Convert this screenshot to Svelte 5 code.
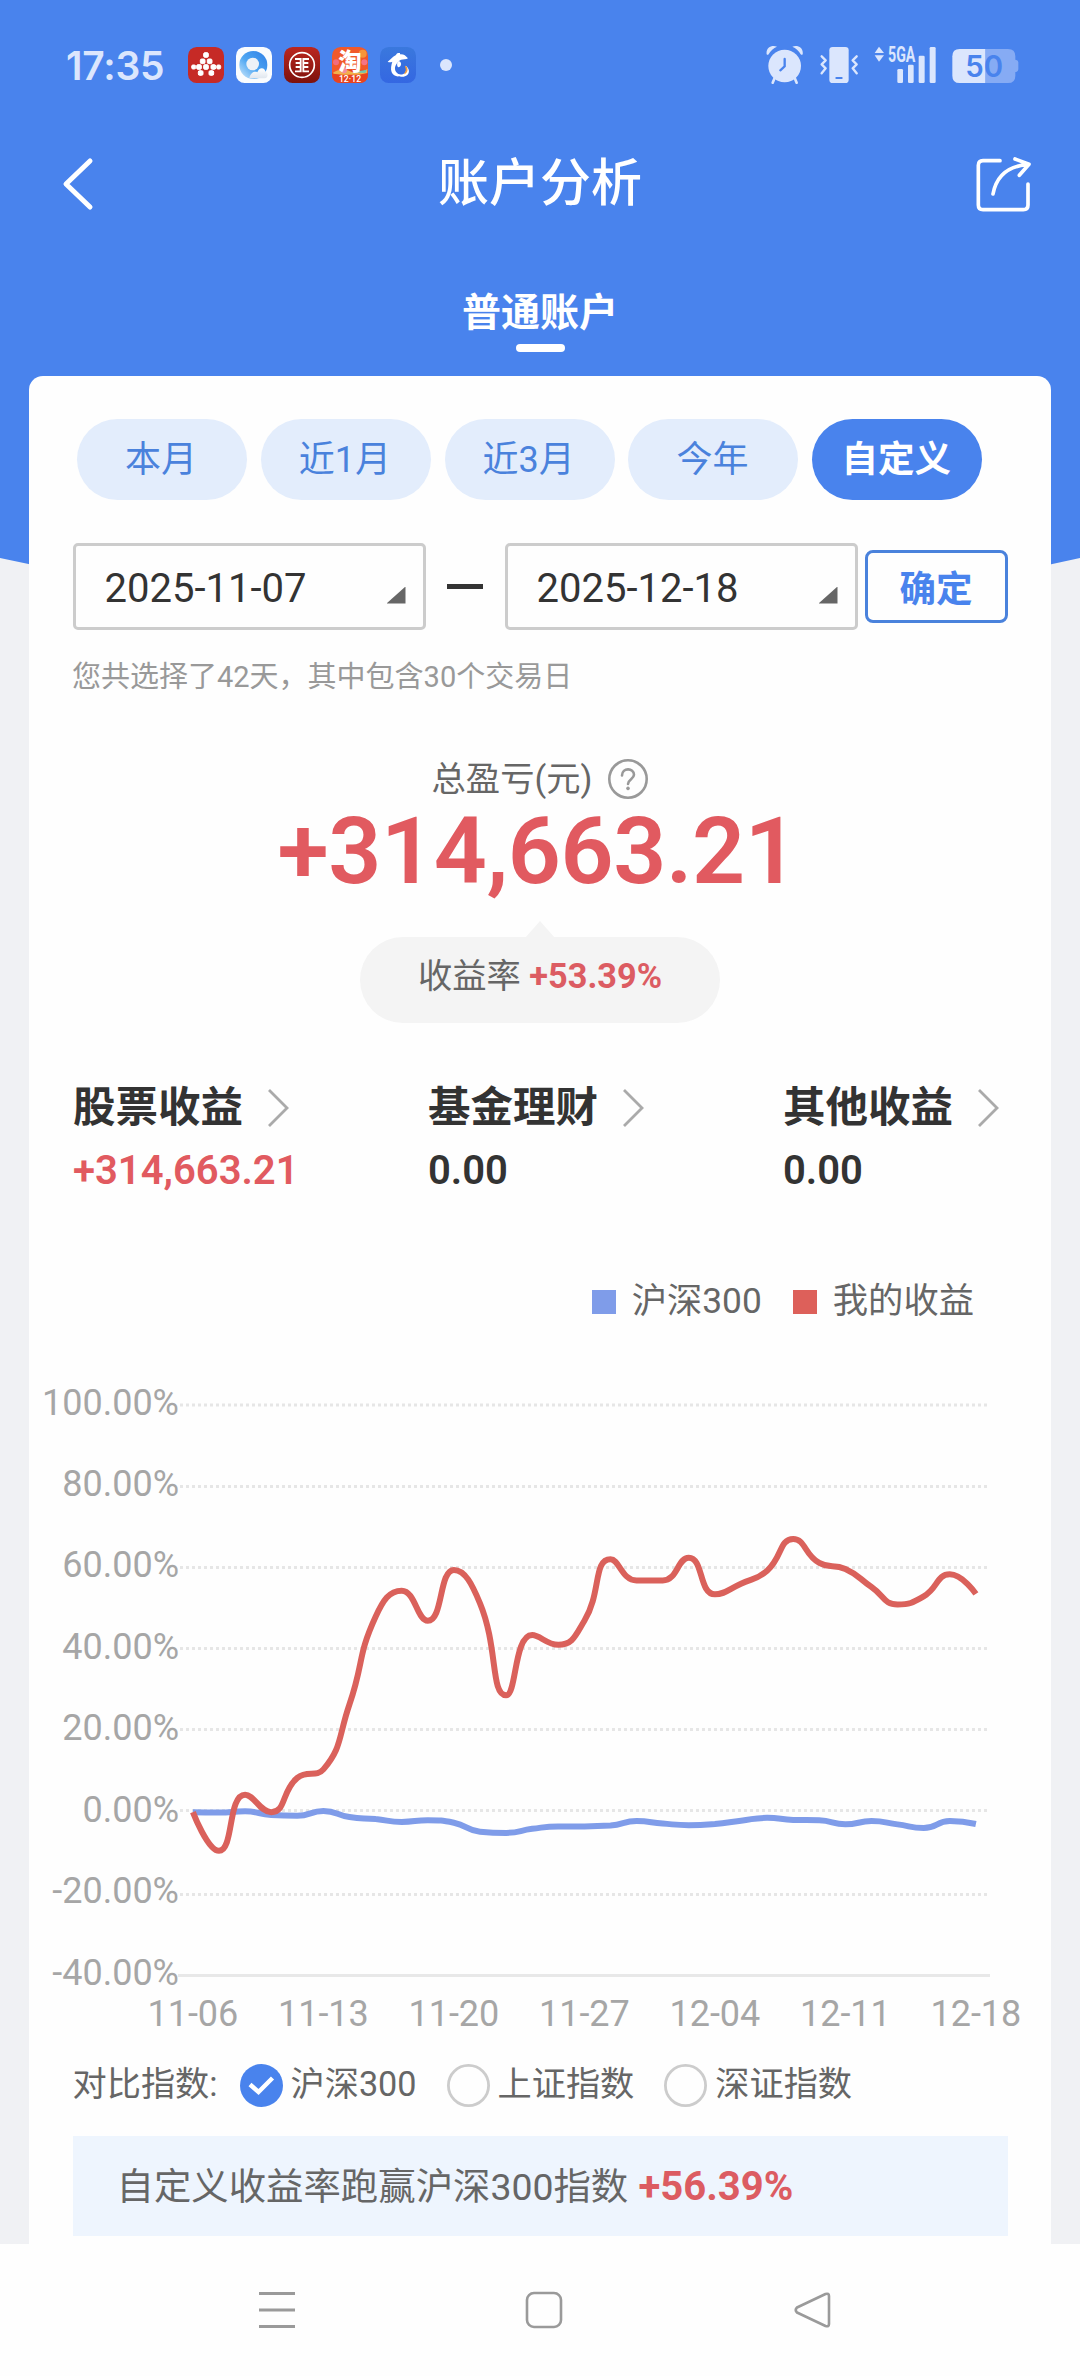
<script lang="ts">
	interface Option {
		key: string;
		label: string;
	}

	const ranges: Option[] = [
		{ key: 'month', label: '本月' },
		{ key: '1m', label: '近1月' },
		{ key: '3m', label: '近3月' },
		{ key: 'year', label: '今年' },
		{ key: 'custom', label: '自定义' }
	];

	const indexes: Option[] = [
		{ key: 'hs300', label: '沪深300' },
		{ key: 'sh', label: '上证指数' },
		{ key: 'sz', label: '深证指数' }
	];

	const incomes = [
		{ title: '股票收益', value: '+314,663.21', up: true },
		{ title: '基金理财', value: '0.00', up: false },
		{ title: '其他收益', value: '0.00', up: false }
	];

	let activeRange = $state('custom');
	let activeIndex = $state('hs300');

	// 收益率（%），每个交易日一个点
	const mine = [
		0, -9.5, 4.3, 0, 8.4, 10.5, 26.5, 48, 54.4, 47, 59.5, 51.3, 28.7, 43.5, 41.1, 47, 62.1, 56.9,
		56.9, 62.5, 53.5, 56.1, 59.3, 67.1, 61.2, 59.7, 55.3, 51, 53, 58.4, 53.6
	];
	const hs300 = [
		0, -0.1, 0.2, -0.7, -0.9, 0.3, -1.2, -1.7, -2.4, -2, -2.6, -4.8, -5.1, -4.1, -3.5, -3.5, -3.3,
		-2.2, -2.8, -3.2, -2.9, -2.1, -1.4, -1.9, -2, -3, -2.2, -3, -3.9, -2.2, -2.9
	];

	const yTicks = [
		{ label: '100.00%', y: 35, base: 45 },
		{ label: '80.00%', y: 116.5, base: 126 },
		{ label: '60.00%', y: 197.5, base: 207 },
		{ label: '40.00%', y: 278.5, base: 289 },
		{ label: '20.00%', y: 359.5, base: 370 },
		{ label: '0.00%', y: 440.5, base: 452 },
		{ label: '-20.00%', y: 524.5, base: 533 },
		{ label: '-40.00%', y: 605.5, base: 615 }
	];
	const xTicks = ['11-06', '11-13', '11-20', '11-27', '12-04', '12-11', '12-18'];

	const X0 = 163.9;
	const STEP = 26.1;

	const px = (i: number) => X0 + i * STEP;
	const py = (v: number) => 35 + (100 - v) * 4.0714;

	function clamp(v: number, a: number, b: number): number {
		return Math.max(Math.min(v, Math.max(a, b)), Math.min(a, b));
	}

	// 平滑曲线，控制点限制在相邻两点之间，避免越过峰值
	function smoothPath(values: number[], smooth = 0.5): string {
		const pts = values.map((v, i) => [px(i), py(v)]);
		let d = `M${pts[0][0]},${pts[0][1]}`;
		let [cx0, cy0] = pts[0];

		for (let i = 1; i < pts.length; i++) {
			const [x, y] = pts[i];
			const [prevX, prevY] = pts[i - 1];
			let cx1 = x;
			let cy1 = y;
			let nx0 = x;
			let ny0 = y;

			if (i < pts.length - 1) {
				const [nextX, nextY] = pts[i + 1];
				const lenPrev = Math.hypot(x - prevX, y - prevY);
				const lenNext = Math.hypot(nextX - x, nextY - y);
				const ratio = lenNext / (lenNext + lenPrev);

				nx0 = clamp(x + (nextX - prevX) * smooth * ratio, nextX, x);
				ny0 = clamp(y + (nextY - prevY) * smooth * ratio, nextY, y);
				cx1 = clamp(x - ((nx0 - x) * lenPrev) / lenNext, prevX, x);
				cy1 = clamp(y - ((ny0 - y) * lenPrev) / lenNext, prevY, y);
				nx0 = x + ((x - cx1) * lenNext) / lenPrev;
				ny0 = y + ((y - cy1) * lenNext) / lenPrev;
			}

			d += `C${[cx0, cy0, cx1, cy1, x, y].map((n) => n.toFixed(2)).join(',')}`;
			cx0 = nx0;
			cy0 = ny0;
		}
		return d;
	}

	const minePath = smoothPath(mine);
	const hs300Path = smoothPath(hs300);
</script>

<div class="screen">
	<svg class="backdrop" width="1080" height="620" viewBox="0 0 1080 620">
		<path d="M0 0H1080V558Q540 679 0 558Z" fill="#4983ed" />
	</svg>

	<div class="status-bar">
		<span class="clock">17:35</span>
		<div class="apps">
			<svg class="app" viewBox="0 0 108 108">
				<rect width="108" height="108" rx="26" fill="#c62a26" />
				<g fill="#fff" stroke="#fff" stroke-width="3">
					<rect x="47" y="17" width="14" height="14" rx="4" />
					<rect x="37" y="36" width="14" height="14" rx="4" />
					<rect x="58" y="36" width="14" height="14" rx="4" />
					<rect x="26" y="53" width="14" height="14" rx="4" />
					<rect x="47" y="53" width="14" height="14" rx="4" />
					<rect x="69" y="53" width="14" height="14" rx="4" />
					<rect x="11" y="54" width="12" height="12" rx="4" />
					<rect x="86" y="54" width="12" height="12" rx="4" />
					<rect x="31" y="71" width="14" height="14" rx="4" />
					<rect x="63" y="71" width="14" height="14" rx="4" />
				</g>
			</svg>
			<svg class="app" viewBox="0 0 108 108">
				<defs>
					<linearGradient id="ring" x1="1" y1="0" x2="0" y2="1">
						<stop offset="0" stop-color="#2f7fe6" />
						<stop offset="0.55" stop-color="#4ea6f2" />
						<stop offset="1" stop-color="#d4ecfc" />
					</linearGradient>
					<linearGradient id="cloud" x1="0" y1="0" x2="0" y2="1">
						<stop offset="0" stop-color="#ffffff" />
						<stop offset="1" stop-color="#dfe6ee" />
					</linearGradient>
				</defs>
				<rect width="108" height="108" rx="26" fill="#fafcfe" />
				<circle cx="52" cy="54" r="42" fill="url(#ring)" />
				<circle cx="50" cy="51" r="19" fill="#eef2f7" />
				<path d="M40 94C44 76 56 72 64 76C68 62 84 58 89 74C97 78 97 92 86 94Z" fill="url(#cloud)" />
			</svg>
			<svg class="app" viewBox="0 0 108 108">
				<defs>
					<linearGradient id="bank" x1="0" y1="0" x2="0" y2="1">
						<stop offset="0" stop-color="#bb2720" />
						<stop offset="1" stop-color="#7d120d" />
					</linearGradient>
				</defs>
				<rect width="108" height="108" rx="26" fill="url(#bank)" />
				<circle cx="54" cy="54" r="37" fill="none" stroke="#fff" stroke-width="5" />
				<path
					d="M33 36H50V48H35M75 36H58V48H73M35 60H50V73H33M73 60H58V73H75M50 46V62M58 46V62"
					fill="none"
					stroke="#fff"
					stroke-width="5.5"
				/>
			</svg>
			<svg class="app" viewBox="0 0 108 108">
				<rect width="108" height="108" rx="26" fill="#f0592a" />
				<path d="M0 78Q40 62 108 70V82Q108 108 82 108H26Q0 108 0 82Z" fill="#e8431f" />
				<path d="M4 76Q30 60 58 74Q84 82 106 66V78Q70 88 4 80Z" fill="#f2b04c" />
				<path d="M62 76L104 68L100 78Z" fill="#6fc7b0" />
				<circle cx="92" cy="20" r="12" fill="#f7963a" />
				<circle cx="12" cy="46" r="9" fill="#f06c7c" />
				<circle cx="97" cy="46" r="9" fill="#f47486" />
				<circle cx="36" cy="70" r="9" fill="#f58da0" />
				<text x="54" y="68" class="app-char">淘</text>
				<text x="54" y="105" class="app-date">12·12</text>
			</svg>
			<svg class="app" viewBox="0 0 108 108">
				<defs>
					<linearGradient id="sea" x1="0" y1="0" x2="0" y2="1">
						<stop offset="0" stop-color="#3a78dd" />
						<stop offset="1" stop-color="#3467e2" />
					</linearGradient>
				</defs>
				<rect width="108" height="108" rx="26" fill="url(#sea)" />
				<path
					d="M23 44C32 38 37 30 48 24C50 18 54 17 60 18L60 22C71 21 77 26 84 34C78 38 70 37 63 38C52 44 44 56 45 66C46 76 54 84 64 85C54 92 40 87 35 76C31 66 34 54 37 44C32 46 27 46 23 44Z"
					fill="#fff"
				/>
				<path d="M56 42C66 44 66 60 54 61C50 56 50 46 56 42Z" fill="#fff" />
				<path d="M46 72C52 84 66 86 74 78C80 72 80 64 76 56C88 62 90 76 82 84C70 94 50 90 46 72Z" fill="#fff" />
				<path d="M76 57C84 64 82 76 74 80C80 72 80 65 76 57Z" stroke="#f39a35" stroke-width="3" fill="#f39a35" />
			</svg>
		</div>
		<i class="more-dot"></i>

		<div class="system">
			<svg width="38" height="40" viewBox="75 45 114 120" fill="#dbe6fd">
				<circle cx="131" cy="108" r="49" />
				<path d="M77 73C74 55 90 44 108 50Q92 56 83 73Q79 76 77 73Z" />
				<path d="M185 73C188 55 172 44 154 50Q170 56 179 73Q183 76 185 73Z" />
				<path d="M100 146L95 158M162 146L167 158" stroke="#dbe6fd" stroke-width="8" stroke-linecap="round" />
				<path d="M131 87V109L118 121" stroke="#4983ed" stroke-width="7" stroke-linecap="round" fill="none" />
			</svg>
			<svg class="vibrate" width="38" height="40" viewBox="237 45 114 120">
				<rect x="265" y="51" width="58" height="108" rx="10" fill="#dbe6fd" />
				<rect x="283" y="141" width="22" height="6" rx="3" fill="#4983ed" />
				<path
					d="M242 79L254 91L242 103L254 115L242 130M347 79L335 91L347 103L335 115L347 130"
					fill="none"
					stroke="#dbe6fd"
					stroke-width="7"
					stroke-linecap="round"
					stroke-linejoin="round"
				/>
			</svg>
			<svg class="signal" width="62" height="60" viewBox="400 15 186 180" fill="#dbe6fd">
				<path d="M402 69L415 50L430 69Z" />
				<path d="M402 76L415 95L430 76Z" />
				<text x="442" y="96" class="net" textLength="82" lengthAdjust="spacingAndGlyphs">5GA</text>
				<rect x="470" y="117" width="17" height="42" rx="4" />
				<rect x="502" y="104" width="17" height="55" rx="4" />
				<rect x="534" y="77" width="18" height="82" rx="4" />
				<rect x="567" y="51" width="18" height="108" rx="4" />
			</svg>
			<svg class="battery" width="67" height="40" viewBox="635 45 201 120">
				<path d="M735 57H803Q825 57 825 79V89Q834 90 834 97V118Q834 125 825 126V137Q825 159 803 159H735Z" fill="#86abf4" />
				<path d="M735 57H658Q636 57 636 79V137Q636 159 658 159H735Z" fill="#dbe6fd" />
				<text x="675" y="141" class="level" fill="#4983ed">50</text>
			</svg>
		</div>
	</div>

	<header class="title-bar">
		<svg width="36" height="56" viewBox="0 0 36 56" fill="none" stroke="#fff" stroke-width="5">
			<path d="M32 6L8 29L32 52" stroke-linecap="round" stroke-linejoin="round" />
		</svg>
		<h1>账户分析</h1>
		<svg width="60" height="60" viewBox="40 39 180 180" fill="none" stroke="#fff" stroke-width="11">
			<path
				d="M118 62H67Q53 62 53 76V195Q53 209 67 209H188Q202 209 202 195V132M97 162Q112 82 198 74M163 57L205 73L176 106"
				stroke-linecap="round"
				stroke-linejoin="round"
			/>
		</svg>
	</header>

	<div class="account-tab">
		<span>普通账户</span>
		<i></i>
	</div>

	<main class="card">
		<div class="ranges">
			{#each ranges as range (range.key)}
				<button
					class="range"
					class:active={activeRange === range.key}
					onclick={() => (activeRange = range.key)}>{range.label}</button
				>
			{/each}
		</div>

		<div class="dates">
			<div class="date">
				<span>2025-11-07</span>
				<i class="corner"></i>
			</div>
			<i class="dash"></i>
			<div class="date">
				<span>2025-12-18</span>
				<i class="corner"></i>
			</div>
			<button class="confirm">确定</button>
		</div>
		<p class="note">您共选择了42天，其中包含30个交易日</p>

		<div class="total-label">
			<span>总盈亏(元)</span>
			<svg width="40" height="40" viewBox="0 0 40 40" fill="none" stroke="#999" stroke-width="2.6">
				<circle cx="20" cy="20" r="18.7" />
				<path d="M14 16.5C14 8.5 26 8.5 26 15.8C26 20 20 20.5 20 25" stroke-linecap="round" />
				<circle cx="20" cy="29.4" r="1.4" fill="#999" stroke-width="1" />
			</svg>
		</div>
		<div class="total">+314,663.21</div>
		<div class="rate">收益率 <b>+53.39%</b></div>

		<div class="incomes">
			{#each incomes as item (item.title)}
				<div class="income">
					<div class="income-title">
						<span>{item.title}</span>
						<svg width="24" height="40" viewBox="0 0 24 40" fill="none" stroke="#aaa" stroke-width="2.8">
							<path d="M3 2L21 20L3 38" />
						</svg>
					</div>
					<div class="income-value" class:up={item.up}>{item.value}</div>
				</div>
			{/each}
		</div>

		<div class="legend">
			<i class="swatch blue"></i><span>沪深300</span>
			<i class="swatch red"></i><span>我的收益</span>
		</div>

		<svg class="chart" width="1022" height="670" viewBox="0 0 1022 670">
			{#each yTicks as tick, i (tick.label)}
				{#if i < yTicks.length - 1}
					<line x1="151" x2="958" y1={tick.y} y2={tick.y} class="grid" />
				{:else}
					<line x1="149" x2="961" y1={tick.y} y2={tick.y} class="axis" />
				{/if}
				<text x="150" y={tick.base} class="y-label">{tick.label}</text>
			{/each}
			{#each xTicks as label, i (label)}
				<text x={px(i * 5)} y="656" class="x-label">{label}</text>
			{/each}
			<path d={hs300Path} class="line" stroke="#7f9ce9" />
			<path d={minePath} class="line" stroke="#da615b" />
		</svg>

		<div class="compare">
			<span class="compare-label">对比指数:</span>
			{#each indexes as item (item.key)}
				<button class="radio" onclick={() => (activeIndex = item.key)}>
					<svg width="43" height="43" viewBox="0 0 43 43" fill="none">
						{#if activeIndex === item.key}
							<circle cx="21.5" cy="21.5" r="21.5" fill="#4983ed" />
							<path d="M10 20.5L18.5 28L32.5 14" stroke="#fff" stroke-width="4.4" />
						{:else}
							<circle cx="21.5" cy="21.5" r="20.1" stroke="#ccc" stroke-width="2.8" />
						{/if}
					</svg>
					<span>{item.label}</span>
				</button>
			{/each}
		</div>

		<div class="banner">自定义收益率跑赢沪深300指数 <b>+56.39%</b></div>
	</main>

	<nav class="nav-bar">
		<svg width="36" height="38" viewBox="0 0 36 38" stroke="#9a9a9a" stroke-width="3">
			<path d="M0 2.5H36M0 19H36M0 35.5H36" />
		</svg>
		<svg width="38" height="38" viewBox="0 0 38 38" fill="none" stroke="#9a9a9a" stroke-width="2.6">
			<rect x="2" y="2" width="34" height="34" rx="7" />
		</svg>
		<svg width="38" height="38" viewBox="0 0 38 38" fill="none" stroke="#9a9a9a" stroke-width="2.6">
			<path d="M32.5 3L4 16.5Q1.5 19 4 21.5L32.5 35Q36 36 36 33V5Q36 2 32.5 3Z" stroke-linejoin="round" />
		</svg>
	</nav>
</div>

<style>
	:global(body) {
		margin: 0;
		background: #f0f1f4;
	}

	.screen {
		position: relative;
		width: 1080px;
		height: 2376px;
		overflow: hidden;
		display: flex;
		flex-direction: column;
		background: #f0f1f4;
		color: #666;
		font-family: Roboto, 'Noto Sans CJK SC', sans-serif;
	}

	.screen > :not(.backdrop) {
		position: relative;
	}

	.backdrop {
		position: absolute;
		top: 0;
		left: 0;
	}

	button {
		padding: 0;
		border: none;
		background: none;
		font-family: inherit;
		color: inherit;
	}

	svg {
		display: block;
		flex-shrink: 0;
	}

	.status-bar {
		height: 130px;
		box-sizing: border-box;
		padding: 0 61px 0 66px;
		display: flex;
		align-items: center;
	}

	.clock {
		width: 122px;
		font-family: Inter, sans-serif;
		font-size: 39px;
		font-weight: 600;
		letter-spacing: -0.2px;
		color: #dbe6fd;
	}

	.apps {
		display: flex;
		gap: 12px;
	}

	.app {
		width: 36px;
		height: 36px;
	}

	.app-char {
		font-size: 70px;
		font-weight: 900;
		fill: #fff;
		text-anchor: middle;
	}

	.app-date {
		font-size: 26px;
		font-weight: 500;
		fill: #fff;
		text-anchor: middle;
	}

	.more-dot {
		width: 12px;
		height: 12px;
		margin-left: 24px;
		border-radius: 50%;
		background: #dbe6fd;
	}

	.system {
		margin-left: auto;
		display: flex;
		align-items: center;
		gap: 16px;
	}

	.net {
		font-size: 64px;
		font-weight: 700;
	}

	.level {
		font-family: Inter, sans-serif;
		font-size: 88px;
		font-weight: 600;
	}

	.title-bar {
		height: 106px;
		padding: 0 46px 0 58px;
		display: flex;
		align-items: center;
		justify-content: space-between;
	}

	h1 {
		margin: 2px 0 0 12px;
		font-size: 51px;
		line-height: 60px;
		font-weight: 500;
		color: #fff;
	}

	.account-tab {
		height: 140px;
		box-sizing: border-box;
		padding-top: 48px;
		display: flex;
		flex-direction: column;
		align-items: center;
		color: #fff;
		font-size: 39px;
		line-height: 58px;
		font-weight: 700;
	}

	.account-tab i {
		width: 49px;
		height: 8px;
		margin-top: 2px;
		border-radius: 4px;
		background: #fff;
	}

	.card {
		height: 1868px;
		box-sizing: border-box;
		margin: 0 29px;
		padding-top: 43px;
		border-radius: 14px 14px 0 0;
		background: #fefefe;
	}

	.ranges {
		display: flex;
		gap: 13.8px;
		padding-left: 48px;
	}

	.range {
		width: 170px;
		height: 81px;
		padding: 0 2px 7px 0;
		border-radius: 41px;
		background: #e3edfc;
		color: #4a82dc;
		font-size: 36px;
	}

	.range.active {
		background: #4983ed;
		color: #fff;
		font-size: 36.5px;
		font-weight: 700;
	}

	.dates {
		height: 87px;
		margin: 43px 43px 0 43.5px;
		display: flex;
		align-items: center;
	}

	.date {
		width: 353px;
		height: 87px;
		box-sizing: border-box;
		padding: 0 17px 0 29px;
		border: 3px solid #ccc;
		border-radius: 5px;
		display: flex;
		align-items: center;
		justify-content: space-between;
		color: #333;
		font-size: 40px;
	}

	.date span {
		padding-top: 3px;
	}

	.corner {
		width: 19px;
		height: 17px;
		margin-top: 17px;
		background: #666;
		clip-path: polygon(100% 0, 100% 100%, 0 100%);
	}

	.dash {
		width: 36px;
		height: 5px;
		margin: 0 21.5px;
		background: #333;
	}

	.confirm {
		width: 143px;
		height: 73px;
		margin-left: 7px;
		border: 3px solid #4a82dc;
		border-radius: 8px;
		color: #4983ed;
		font-size: 36.5px;
		font-weight: 700;
	}

	.note {
		height: 40px;
		margin: 27px 0 0 43px;
		font-size: 29px;
		line-height: 41px;
		color: #999;
	}

	.total-label {
		height: 40px;
		margin-top: 62px;
		display: flex;
		align-items: center;
		justify-content: center;
		gap: 16px;
		font-size: 34.3px;
		line-height: 40px;
	}

	.total {
		height: 100px;
		margin-top: 1px;
		padding-right: 5px;
		text-align: center;
		font-size: 93px;
		line-height: 103px;
		font-weight: 600;
		letter-spacing: -0.4px;
		color: #e15a60;
	}

	.rate {
		position: relative;
		width: 360px;
		height: 86px;
		box-sizing: border-box;
		margin: 37px auto 0;
		border-radius: 43px;
		background: #f4f4f4;
		text-align: center;
		font-size: 34.3px;
		line-height: 79px;
	}

	/* 气泡上方的小三角 */
	.rate::before {
		content: '';
		position: absolute;
		left: 165px;
		top: -16px;
		width: 30px;
		height: 17px;
		background: #f4f4f4;
		clip-path: polygon(50% 0, 100% 100%, 0 100%);
	}

	b {
		color: #dc5c62;
	}

	.incomes {
		display: flex;
		margin: 58px 0 0 44px;
	}

	.income {
		width: 355px;
		flex-shrink: 0;
	}

	.income:last-child {
		width: auto;
	}

	.income-title {
		height: 54px;
		display: flex;
		align-items: center;
		gap: 23px;
		color: #333;
		font-size: 42.5px;
		line-height: 54px;
		font-weight: 700;
	}

	.income-value {
		height: 55px;
		margin-top: 8px;
		color: #333;
		font-size: 40px;
		line-height: 55px;
		font-weight: 600;
	}

	.income-value.up {
		color: #e15a60;
	}

	.legend {
		height: 42px;
		margin: 82px 77px 0 0;
		display: flex;
		align-items: center;
		justify-content: flex-end;
		font-size: 35.3px;
		line-height: 42px;
	}

	.swatch {
		width: 24px;
		height: 24px;
		margin: 2px 16px 0 31px;
	}

	.swatch.blue {
		background: #7f9ce9;
	}

	.swatch.red {
		background: #dd605a;
	}

	.chart {
		margin-top: 48px;
	}

	.grid {
		stroke: #e6e6e6;
		stroke-width: 3;
		stroke-dasharray: 3 3;
	}

	.axis {
		stroke: #e8e8e8;
		stroke-width: 3;
	}

	.line {
		fill: none;
		stroke-width: 6;
		stroke-linejoin: bevel;
	}

	.y-label,
	.x-label {
		font-size: 36px;
		fill: #a6a6a6;
	}

	.y-label {
		text-anchor: end;
	}

	.x-label {
		text-anchor: middle;
	}

	.compare {
		height: 43px;
		margin: 24px 0 0 43.5px;
		display: flex;
		align-items: center;
		font-size: 34.2px;
	}

	.compare span {
		height: 43px;
		line-height: 41px;
	}

	.compare .compare-label {
		width: 167px;
	}

	.radio {
		display: flex;
		align-items: center;
		gap: 8px;
		margin-right: 30px;
		font-size: 34.2px;
	}

	.banner {
		height: 100px;
		margin: 29px 43.5px 0;
		padding-left: 44px;
		background: #eef5fe;
		font-size: 37.4px;
		line-height: 101px;
	}

	.banner b {
		margin-left: 1px;
		font-size: 40px;
	}

	.nav-bar {
		height: 132px;
		padding: 0 249px 0 259px;
		display: flex;
		align-items: center;
		justify-content: space-between;
		background: #fefefe;
	}
</style>
